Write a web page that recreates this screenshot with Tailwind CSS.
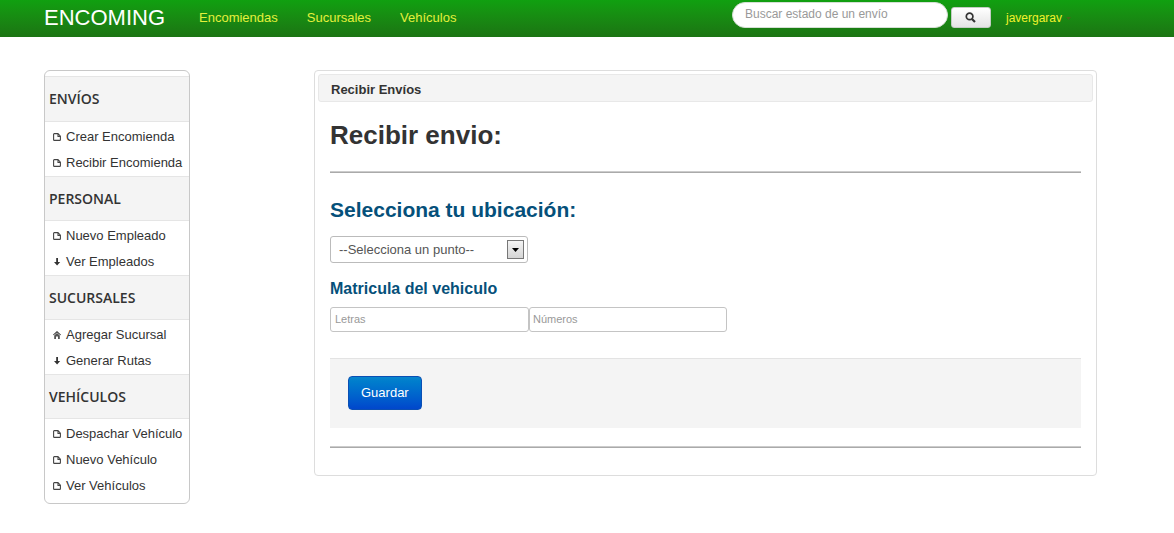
<!DOCTYPE html>
<html lang="es">
<head>
<meta charset="utf-8">
<title>Encoming</title>
<script src="https://cdn.jsdelivr.net/npm/@tailwindcss/browser@4"></script>
</head>
<body class="bg-white font-['Liberation_Sans',sans-serif] text-[13px] leading-5 text-[#333]">
<svg class="hidden">
  <symbol id="doc" viewBox="0 0 8 8"><path d="M5 .6H1.3Q.6.6.6 1.3v5.4q0 .7.7.7h5.4q.7 0 .7-.7V3.2L5 .6v2.9h2.4" fill="none" stroke="#444" stroke-width="1.1"/></symbol>
  <symbol id="down" viewBox="0 0 8 8"><path d="M3.2 0h1.8v4h2.2L4.1 7.6 1 4h2.2z" fill="currentColor"/></symbol>
  <symbol id="home" viewBox="0 0 8 8"><path d="M4 0l4 3.8-.6.5L4 1.4.6 4.3 0 3.8z" fill="currentColor"/><path d="M1.2 4.4L4 2.1l2.8 2.3V8H5V5.4H3V8H1.2z" fill="#555"/></symbol>
</svg>
<header class="flex h-[37px] bg-linear-to-b from-[#10a010] to-[#1b7413] pl-11">
  <a href="#" class="mt-2 w-[155px] text-[22px] text-white">ENCOMING</a>
  <nav class="mt-2 flex gap-[29px] text-[#e4f03c]">
    <a href="#">Encomiendas</a>
    <a href="#">Sucursales</a>
    <a href="#">Vehículos</a>
  </nav>
  <form class="mr-[103px] ml-auto flex items-start text-xs">
    <input type="search" aria-label="Buscar estado de un envío" placeholder="Buscar estado de un envío" class="mt-0.5 h-[26px] w-[216px] rounded-full border border-[#d5dfd5] bg-white px-3 pb-0.5 placeholder:text-[#999]">
    <button type="button" aria-label="Buscar" class="mt-[7px] ml-[3px] flex h-[21px] w-10 items-center justify-center rounded-[3px] border border-[#c4ccc4] bg-linear-to-b from-white to-[#e4e4e4]">
      <svg class="size-[11px]" viewBox="0 0 11 11" fill="none" stroke="#333"><circle cx="4.6" cy="4.4" r="3.3" stroke-width="1.7"/><path d="M7 7l3 3" stroke-width="2.2"/></svg>
    </button>
    <a href="#" class="mt-2 ml-[15px] flex items-center gap-1 leading-5 text-[#f1f12c]">javergarav
      <svg class="h-[3px] w-[5px]" viewBox="0 0 5 3"><path d="M0 0h5L2.5 3z" fill="#456b1c"/></svg>
    </a>
  </form>
</header>
<div class="flex items-start justify-between pt-[33px] pr-[77px] pl-11">
  <aside class="w-[146px] shrink-0 rounded-md border border-[#c8c8c8] pt-[5px] pb-1">
    <h2 class="flex h-[46px] items-center border-y border-[#e5e5e5] bg-[#f4f4f4] pl-1 font-['Open_Sans',sans-serif] text-sm font-semibold">ENVÍOS</h2>
    <ul class="h-[54px] pt-0.5 leading-[26px]">
      <li><a href="#" class="flex items-center gap-[5px] pl-2"><svg class="size-2"><use href="#doc"/></svg>Crear Encomienda</a></li>
      <li><a href="#" class="flex items-center gap-[5px] pl-2"><svg class="size-2"><use href="#doc"/></svg>Recibir Encomienda</a></li>
    </ul>
    <h2 class="flex h-[45px] items-center border-y border-[#e5e5e5] bg-[#f4f4f4] pl-1 font-['Open_Sans',sans-serif] text-sm font-semibold">PERSONAL</h2>
    <ul class="h-[54px] pt-0.5 leading-[26px]">
      <li><a href="#" class="flex items-center gap-[5px] pl-2"><svg class="size-2"><use href="#doc"/></svg>Nuevo Empleado</a></li>
      <li><a href="#" class="flex items-center gap-[5px] pl-2"><svg class="size-2"><use href="#down"/></svg>Ver Empleados</a></li>
    </ul>
    <h2 class="flex h-[45px] items-center border-y border-[#e5e5e5] bg-[#f4f4f4] pl-1 font-['Open_Sans',sans-serif] text-sm font-semibold">SUCURSALES</h2>
    <ul class="h-[54px] pt-0.5 leading-[26px]">
      <li><a href="#" class="flex items-center gap-[5px] pl-2"><svg class="size-2"><use href="#home"/></svg>Agregar Sucursal</a></li>
      <li><a href="#" class="flex items-center gap-[5px] pl-2"><svg class="size-2"><use href="#down"/></svg>Generar Rutas</a></li>
    </ul>
    <h2 class="flex h-[45px] items-center border-y border-[#e5e5e5] bg-[#f4f4f4] pl-1 font-['Open_Sans',sans-serif] text-sm font-semibold">VEHÍCULOS</h2>
    <ul class="pt-0.5 leading-[26px]">
      <li><a href="#" class="flex items-center gap-[5px] pl-2"><svg class="size-2"><use href="#doc"/></svg>Despachar Vehículo</a></li>
      <li><a href="#" class="flex items-center gap-[5px] pl-2"><svg class="size-2"><use href="#doc"/></svg>Nuevo Vehículo</a></li>
      <li><a href="#" class="flex items-center gap-[5px] pl-2"><svg class="size-2"><use href="#doc"/></svg>Ver Vehículos</a></li>
    </ul>
  </aside>
  <main class="ml-31 flex-1 rounded border border-[#ddd] p-[3px] pb-[27px]">
    <div class="flex h-7 items-center rounded-[3px] border border-[#e8e8e8] bg-[#f4f4f4] px-3 pt-1 font-bold">Recibir Envíos</div>
    <form class="px-3">
      <h1 class="mt-[17px] text-[26px] leading-8 font-bold">Recibir envio:</h1>
      <hr class="mt-5 h-0.5 border-t border-b border-t-[#ccc] border-b-[#aaa]">
      <h2 class="mt-[23px] text-[21px] leading-7 font-bold text-[#05507a]"><label for="punto">Selecciona tu ubicación:</label></h2>
      <div class="mt-3 grid w-[198px] grid-cols-1 grid-rows-1 items-center">
        <select id="punto" class="col-start-1 row-start-1 h-[27px] appearance-none rounded-[3px] border border-[#bbb] bg-white pl-2 text-[13px] text-[#555]"><option>--Selecciona un punto--</option></select>
        <span class="pointer-events-none col-start-1 row-start-1 mr-1 flex h-[19px] w-[17px] items-center justify-center justify-self-end border border-[#777] bg-linear-to-b from-[#f4f4f4] to-[#d5d5d5]"><svg class="h-1 w-[7px]" viewBox="0 0 7 4"><path d="M0 0h7L3.5 4z"/></svg></span>
      </div>
      <h3 class="mt-4 text-base leading-5 font-bold text-[#05507a]">Matricula del vehiculo</h3>
      <div class="mt-2 flex text-[11px]">
        <input type="text" aria-label="Letras" placeholder="Letras" class="h-[25px] w-[199px] rounded-[3px] border border-[#c4c4c4] px-1 pb-0.5 placeholder:text-[#999]">
        <input type="text" aria-label="Números" placeholder="Números" class="h-[25px] w-[198px] rounded-[3px] border border-[#c4c4c4] px-[3px] pb-0.5 placeholder:text-[#999]">
      </div>
      <div class="mt-[26px] h-[70px] border-t border-[#e3e3e3] bg-[#f4f4f4] px-[18px] pt-[17px]">
        <button type="button" class="h-[34px] rounded border border-[#0a4fb4] bg-linear-to-b from-[#0885cc] to-[#0246cc] px-3 text-white">Guardar</button>
      </div>
      <hr class="mt-[18px] h-0.5 border-t border-b border-t-[#ccc] border-b-[#aaa]">
    </form>
  </main>
</div>
</body>
</html>
